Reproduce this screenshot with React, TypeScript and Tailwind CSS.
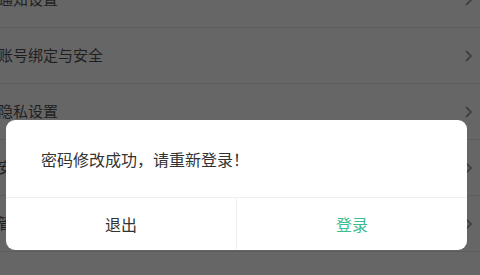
const rows = ["通知设置", "账号绑定与安全", "隐私设置", "安全中心", "管理"];

function Chevron() {
  return (
    <svg width="10" height="14" viewBox="0 0 10 14" className="shrink-0">
      <path d="M2 2l5 5-5 5" fill="none" stroke="#3f3f3f" strokeWidth="1.8" />
    </svg>
  );
}

export default function App() {
  return (
    <div
      className="relative w-[480px] h-[275px] overflow-hidden bg-[#666666]"
      style={{ fontFamily: '"Noto Sans CJK SC", "Noto Sans", sans-serif' }}
    >
      <div className="flex flex-col -mt-[28px]">
        {rows.map((label) => (
          <div
            key={label}
            className="flex items-center justify-between h-[56px] pl-0 pr-[6px] border-b border-[#5c5c5c] -ml-[2px]"
          >
            <span className="text-[15px] text-[#1f1f1f]">{label}</span>
            <Chevron />
          </div>
        ))}
      </div>

      <div className="absolute left-[6px] top-[120px] w-[461px] h-[130px] bg-white rounded-[9px] flex flex-col">
        <div className="h-[78px] flex items-center pl-[35px] text-[16px] text-[#333333] border-b border-[#efefef]">
          密码修改成功，请重新登录！
        </div>
        <div className="flex flex-1">
          <div className="flex-1 flex items-center justify-center text-[16px] text-[#333333] border-r border-[#efefef]">
            退出
          </div>
          <div className="flex-1 flex items-center justify-center text-[16px] text-[#3dbd8d]">
            登录
          </div>
        </div>
      </div>
    </div>
  );
}
